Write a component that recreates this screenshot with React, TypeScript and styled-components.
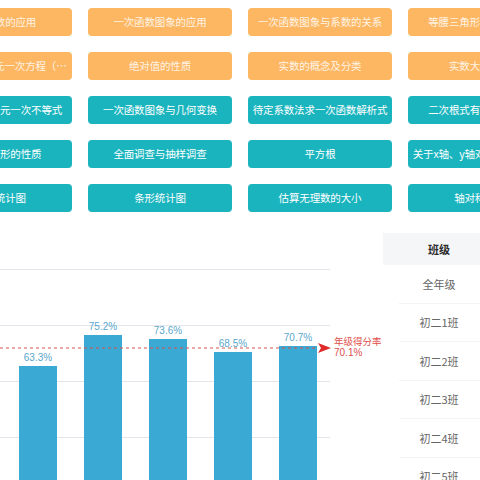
import React from 'react';
import styled, { createGlobalStyle } from 'styled-components';

const GlobalStyle = createGlobalStyle`
  html, body {
    margin: 0;
    padding: 0;
    background: #ffffff;
    overflow: hidden;
  }
  body {
    font-family: 'Noto Sans CJK SC', 'Noto Sans', sans-serif;
  }
`;

const Page = styled.div`
  width: 480px;
  height: 480px;
  overflow: hidden;
  padding-top: 8px;
  box-sizing: border-box;
`;

const TopicGrid = styled.div`
  display: grid;
  grid-template-columns: repeat(4, 144px);
  grid-auto-rows: 28px;
  column-gap: 16px;
  row-gap: 16px;
  margin-left: -72px;
`;

const TopicButton = styled.div<{ tone: 'weak' | 'strong' }>`
  display: block;
  padding: 0 4px;
  line-height: 28px;
  text-align: center;
  border-radius: 4px;
  background-color: ${({ tone }) => (tone === 'weak' ? '#fdb763' : '#19b4be')};
  color: ${({ tone }) => (tone === 'weak' ? '#fff3e4' : '#ffffff')};
  font-size: 10.5px;
  white-space: nowrap;
  overflow: hidden;
  text-overflow: ellipsis;
  letter-spacing: -0.15px;
`;

const Bottom = styled.div`
  display: flex;
  flex-direction: row;
  margin-top: 21px;
`;

const ChartBox = styled.div`
  width: 383px;
  flex-shrink: 0;
`;

const ClassTable = styled.div`
  display: flex;
  flex-direction: column;
  width: 112px;
  flex-shrink: 0;
`;

const HeaderCell = styled.div`
  height: 32px;
  display: flex;
  align-items: center;
  justify-content: center;
  background-color: #f4f6f8;
  color: #2b2b2b;
  font-size: 11px;
  font-weight: 700;
`;

const BodyCell = styled.div`
  height: 38.5px;
  display: flex;
  align-items: center;
  justify-content: center;
  border-bottom: 1px solid #f3f4f6;
  box-sizing: border-box;
  color: #666666;
  font-size: 11px;
  margin-left: 16px;
  padding-right: 16px;
`;

const topics: { label: string; tone: 'weak' | 'strong' }[] = [
  { label: '一次函数的应用', tone: 'weak' },
  { label: '一次函数图象的应用', tone: 'weak' },
  { label: '一次函数图象与系数的关系', tone: 'weak' },
  { label: '等腰三角形的轴对称性', tone: 'weak' },
  { label: '实际问题与二元一次方程（组）', tone: 'weak' },
  { label: '绝对值的性质', tone: 'weak' },
  { label: '实数的概念及分类', tone: 'weak' },
  { label: '实数大小比较', tone: 'weak' },
  { label: '利用数轴解一元一次不等式', tone: 'strong' },
  { label: '一次函数图象与几何变换', tone: 'strong' },
  { label: '待定系数法求一次函数解析式', tone: 'strong' },
  { label: '二次根式有意义的条件', tone: 'strong' },
  { label: '全等三角形的性质', tone: 'strong' },
  { label: '全面调查与抽样调查', tone: 'strong' },
  { label: '平方根', tone: 'strong' },
  { label: '关于x轴、y轴对称的点的坐标', tone: 'strong' },
  { label: '扇形统计图', tone: 'strong' },
  { label: '条形统计图', tone: 'strong' },
  { label: '估算无理数的大小', tone: 'strong' },
  { label: '轴对称图形', tone: 'strong' },
];

const bars = [
  { value: '63.3%', top: 133 },
  { value: '75.2%', top: 102 },
  { value: '73.6%', top: 106 },
  { value: '68.5%', top: 119 },
  { value: '70.7%', top: 113 },
];

const classes = ['全年级', '初二1班', '初二2班', '初二3班', '初二4班', '初二5班'];

function ScoreChart() {
  const gridLines = [36, 92, 148, 204];
  const avgY = 115;
  return (
    <svg width={383} height={260} viewBox="0 0 383 260">
      {gridLines.map((y) => (
        <line key={y} x1={0} x2={330} y1={y + 0.5} y2={y + 0.5} stroke="#e2e5ea" strokeWidth={1} />
      ))}
      {bars.map((b, i) => {
        const x = 19 + i * 65;
        return (
          <g key={b.value}>
            <rect x={x} y={b.top} width={38} height={260 - b.top} fill="#3aa9d4" />
            <text
              x={x + 19}
              y={b.top - 5}
              textAnchor="middle"
              fontSize={10}
              fill="#5aa7cc"
              fontFamily="'Liberation Sans', sans-serif">
              {b.value}
            </text>
          </g>
        );
      })}
      <line
        x1={0}
        x2={318}
        y1={avgY}
        y2={avgY}
        stroke="#d9534f"
        strokeWidth={1.2}
        strokeDasharray="3 3"
      />
      <path d="M318 110 L331 115 L318 120 L321 115 Z" fill="#e02b2b" />
      <text
        x={334}
        y={112}
        fontSize={9.5}
        fill="#e0504c"
        fontFamily="'Noto Sans CJK SC', sans-serif">
        年级得分率
      </text>
      <text
        x={334}
        y={123}
        fontSize={10}
        fill="#e0504c"
        fontFamily="'Liberation Sans', sans-serif">
        70.1%
      </text>
    </svg>
  );
}

export default function App() {
  return (
    <>
      <GlobalStyle />
      <Page>
        <TopicGrid>
          {topics.map((t) => (
            <TopicButton key={t.label} tone={t.tone}>
              {t.label}
            </TopicButton>
          ))}
        </TopicGrid>
        <Bottom>
          <ChartBox>
            <ScoreChart />
          </ChartBox>
          <ClassTable>
            <HeaderCell>班级</HeaderCell>
            {classes.map((c) => (
              <BodyCell key={c}>{c}</BodyCell>
            ))}
          </ClassTable>
        </Bottom>
      </Page>
    </>
  );
}
